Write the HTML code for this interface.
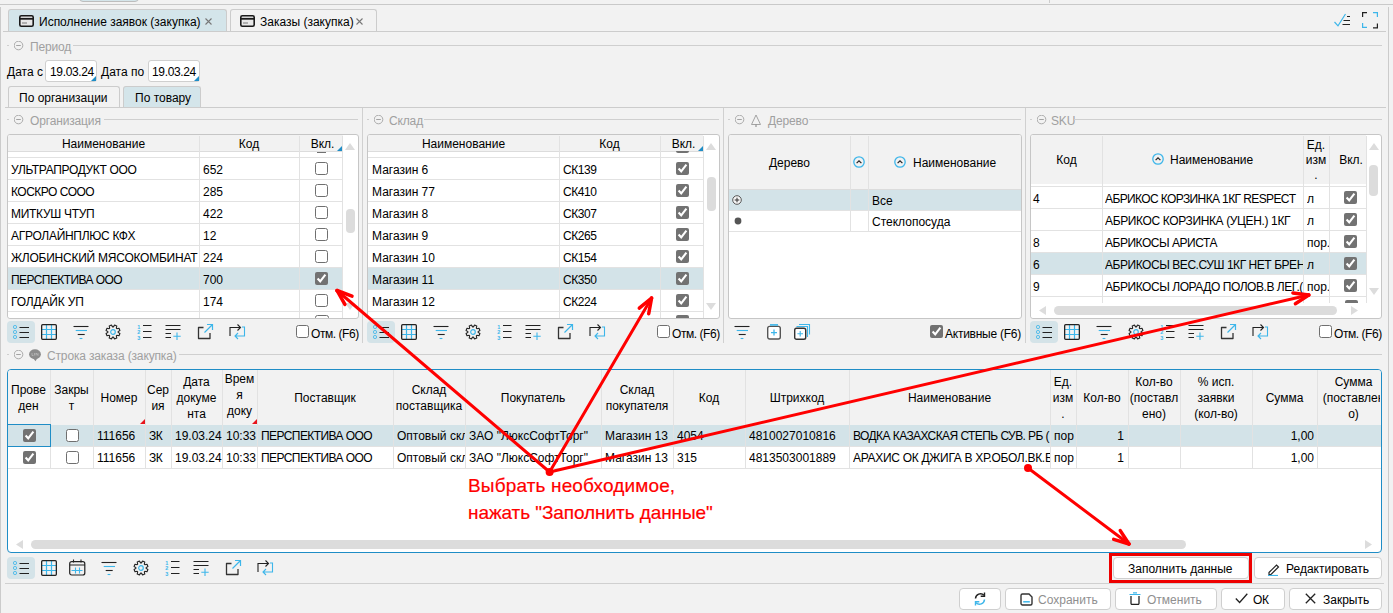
<!DOCTYPE html><html><head><meta charset="utf-8"><style>
html,body{margin:0;padding:0}
body{width:1393px;height:613px;overflow:hidden;position:relative;background:#f2f2f2;font-family:"Liberation Sans",sans-serif;font-size:12px;color:#000}
div{position:absolute;box-sizing:border-box}
.t{white-space:nowrap;line-height:14px;height:14px;overflow:visible}
</style></head><body>
<div style="left:1049px;top:0px;width:1px;height:3px;background:#cccccc"></div>
<div style="left:79px;top:-10px;width:60px;height:12px;background:#d4e5ea;border:1px solid #bdbdbd;border-radius:0 0 4px 4px"></div>
<div style="left:0px;top:4px;width:1393px;height:1px;background:#c9c9c9"></div>
<div style="left:0px;top:7px;width:1px;height:606px;background:#cbcbcb"></div>
<div style="left:1388px;top:7px;width:1px;height:606px;background:#cbcbcb"></div>
<div style="left:8px;top:9px;width:219px;height:23px;background:#d4e5ea;border:1px solid #cccccc;border-bottom:none;border-radius:3px 3px 0 0"></div>
<div style="left:230px;top:9px;width:147px;height:23px;background:#f2f2f2;border:1px solid #cccccc;border-bottom:none;border-radius:3px 3px 0 0"></div>
<div style="left:3px;top:31px;width:1383px;height:1px;background:#cccccc"></div>
<svg style="position:absolute;left:19px;top:15px;" width="15" height="12" viewBox="0 0 15 12"><rect x="0.8" y="0.8" width="13.4" height="10.4" rx="1.5" fill="#e8e8e8" stroke="#1a1a1a" stroke-width="1.6"/><path d="M1 3.8h13" stroke="#1a1a1a" stroke-width="1.8"/><path d="M3 8h5" stroke="#777" stroke-width="1"/></svg>
<svg style="position:absolute;left:240px;top:15px;" width="15" height="12" viewBox="0 0 15 12"><rect x="0.8" y="0.8" width="13.4" height="10.4" rx="1.5" fill="#e8e8e8" stroke="#1a1a1a" stroke-width="1.6"/><path d="M1 3.8h13" stroke="#1a1a1a" stroke-width="1.8"/><path d="M3 8h5" stroke="#777" stroke-width="1"/></svg>
<div class="t" style="left:39px;top:15px;">Исполнение заявок (закупка)</div>
<svg style="position:absolute;left:205px;top:18px;" width="7" height="7" viewBox="0 0 7 7"><path d="M0.5 0.5l6 6M6.5 0.5l-6 6" stroke="#777" stroke-width="1.1"/></svg>
<div class="t" style="left:260px;top:15px;">Заказы (закупка)</div>
<svg style="position:absolute;left:356px;top:18px;" width="7" height="7" viewBox="0 0 7 7"><path d="M0.5 0.5l6 6M6.5 0.5l-6 6" stroke="#777" stroke-width="1.1"/></svg>
<svg style="position:absolute;left:1334px;top:13px;" width="17" height="14" viewBox="0 0 17 14"><path d="M0.5 9l3.5 3.8L11.5 1" fill="none" stroke="#3db6ea" stroke-width="1.2"/><path d="M13 3.5h3M9.5 7.5h6.5M8.5 11.5h7.5" stroke="#222" stroke-width="1.2"/></svg>
<svg style="position:absolute;left:1362px;top:12px;" width="17" height="17" viewBox="0 0 17 17"><g fill="none" stroke-width="1.2"><path d="M0.6 5V0.6H5M15.4 11.5v4.4H11" stroke="#222"/><path d="M11 0.6h4.4V5M5 15.4H0.6V11" stroke="#3db6ea"/></g></svg>
<div style="left:7px;top:45px;width:2px;height:1px;background:#cfcfcf"></div>
<svg style="position:absolute;left:14px;top:41px;" width="10" height="10" viewBox="0 0 10 10"><circle cx="4.5" cy="4.5" r="4.3" fill="none" stroke="#a3a3a3" stroke-width="0.9"/><path d="M2.2 4.5h4.6" stroke="#a3a3a3" stroke-width="1"/></svg>
<div class="t" style="left:30px;top:40px;color:#a0a0a0;letter-spacing:-0.15px">Период</div>
<div style="left:73px;top:45px;width:1309px;height:1px;background:#cfcfcf"></div>
<div class="t" style="left:7px;top:65px;">Дата с</div>
<div style="left:45px;top:60px;width:52px;height:22px;background:#fff;border:1px solid #cfcfcf;border-radius:3px"></div>
<svg style="position:absolute;left:91px;top:76px;" width="5" height="5" viewBox="0 0 5 5"><path d="M5 0V5H0Z" fill="#1f8dc6"/></svg>
<div class="t" style="left:50px;top:65px;letter-spacing:-0.35px">19.03.24</div>
<div class="t" style="left:101px;top:65px;">Дата по</div>
<div style="left:148px;top:60px;width:52px;height:22px;background:#fff;border:1px solid #cfcfcf;border-radius:3px"></div>
<svg style="position:absolute;left:194px;top:76px;" width="5" height="5" viewBox="0 0 5 5"><path d="M5 0V5H0Z" fill="#1f8dc6"/></svg>
<div class="t" style="left:152px;top:65px;letter-spacing:-0.35px">19.03.24</div>
<div style="left:8px;top:86px;width:112px;height:22px;background:#f2f2f2;border:1px solid #cccccc;border-bottom:none;border-radius:3px 3px 0 0"></div>
<div style="left:123px;top:86px;width:78px;height:22px;background:#d4e5ea;border:1px solid #cccccc;border-bottom:none;border-radius:3px 3px 0 0"></div>
<div class="t" style="left:19px;top:91px;">По организации</div>
<div class="t" style="left:135px;top:91px;">По товару</div>
<div style="left:5px;top:107px;width:1381px;height:1px;background:#cccccc"></div>
<div style="left:362px;top:108px;width:1px;height:235px;background:#d0d0d0"></div>
<div style="left:723px;top:108px;width:1px;height:235px;background:#d0d0d0"></div>
<div style="left:1025px;top:108px;width:1px;height:235px;background:#d0d0d0"></div>
<div style="left:7px;top:119px;width:2px;height:1px;background:#cfcfcf"></div>
<svg style="position:absolute;left:14px;top:115px;" width="10" height="10" viewBox="0 0 10 10"><circle cx="4.5" cy="4.5" r="4.3" fill="none" stroke="#a3a3a3" stroke-width="0.9"/><path d="M2.2 4.5h4.6" stroke="#a3a3a3" stroke-width="1"/></svg>
<div class="t" style="left:30px;top:114px;color:#a0a0a0;letter-spacing:-0.15px">Организация</div>
<div style="left:104px;top:119px;width:254px;height:1px;background:#cfcfcf"></div>
<div style="left:7px;top:134px;width:352px;height:185px;background:#fff;border:1px solid #c6c6c6;border-radius:3px"></div>
<div style="left:8px;top:135px;width:335px;height:16px;background:#f2f2f2;border-radius:2px 0 0 0"></div>
<div style="left:8px;top:151px;width:335px;height:1px;background:#dcdcdc"></div>
<div class="t" style="left:8px;width:191px;text-align:center;top:137px;">Наименование</div>
<div class="t" style="left:199px;width:100px;text-align:center;top:137px;">Код</div>
<div class="t" style="left:301px;width:43px;text-align:center;top:137px;">Вкл.</div>
<svg style="position:absolute;left:337px;top:146px;" width="5" height="5" viewBox="0 0 5 5"><path d="M5 0V5H0Z" fill="#1f8dc6"/></svg>
<div style="left:8px;top:157px;width:335px;height:1px;background:#e2e2e2"></div>
<div style="left:317px;top:152px;width:9px;height:1px;background:#707070"></div>
<div style="left:8px;top:179px;width:335px;height:1px;background:#e2e2e2"></div>
<div class="t" style="left:11px;top:163px;"><span style="letter-spacing:-0.33px">УЛЬТРАПРОДУКТ ООО</span></div>
<div class="t" style="left:203px;top:163px;">652</div>
<svg style="position:absolute;left:315px;top:162px;" width="13" height="13" viewBox="0 0 13 13"><rect x="0.5" y="0.5" width="12" height="12" rx="2" fill="#fff" stroke="#6f6f6f" stroke-width="1"/></svg>
<div style="left:8px;top:201px;width:335px;height:1px;background:#e2e2e2"></div>
<div class="t" style="left:11px;top:185px;"><span style="letter-spacing:-0.5px">КОСКРО СООО</span></div>
<div class="t" style="left:203px;top:185px;">285</div>
<svg style="position:absolute;left:315px;top:184px;" width="13" height="13" viewBox="0 0 13 13"><rect x="0.5" y="0.5" width="12" height="12" rx="2" fill="#fff" stroke="#6f6f6f" stroke-width="1"/></svg>
<div style="left:8px;top:223px;width:335px;height:1px;background:#e2e2e2"></div>
<div class="t" style="left:11px;top:207px;"><span style="letter-spacing:-0.3px">МИТКУШ ЧТУП</span></div>
<div class="t" style="left:203px;top:207px;">422</div>
<svg style="position:absolute;left:315px;top:206px;" width="13" height="13" viewBox="0 0 13 13"><rect x="0.5" y="0.5" width="12" height="12" rx="2" fill="#fff" stroke="#6f6f6f" stroke-width="1"/></svg>
<div style="left:8px;top:245px;width:335px;height:1px;background:#e2e2e2"></div>
<div class="t" style="left:11px;top:229px;"><span style="letter-spacing:-0.28px">АГРОЛАЙНПЛЮС КФХ</span></div>
<div class="t" style="left:203px;top:229px;">12</div>
<svg style="position:absolute;left:315px;top:228px;" width="13" height="13" viewBox="0 0 13 13"><rect x="0.5" y="0.5" width="12" height="12" rx="2" fill="#fff" stroke="#6f6f6f" stroke-width="1"/></svg>
<div style="left:8px;top:267px;width:335px;height:1px;background:#e2e2e2"></div>
<div class="t" style="left:11px;top:251px;"><span style="letter-spacing:-0.24px">ЖЛОБИНСКИЙ МЯСОКОМБИНАТ</span></div>
<div class="t" style="left:203px;top:251px;">224</div>
<svg style="position:absolute;left:315px;top:250px;" width="13" height="13" viewBox="0 0 13 13"><rect x="0.5" y="0.5" width="12" height="12" rx="2" fill="#fff" stroke="#6f6f6f" stroke-width="1"/></svg>
<div style="left:8px;top:268px;width:335px;height:21px;background:#d3e3e8"></div>
<div style="left:8px;top:289px;width:335px;height:1px;background:#e2e2e2"></div>
<div class="t" style="left:11px;top:273px;"><span style="letter-spacing:-0.58px">ПЕРСПЕКТИВА ООО</span></div>
<div class="t" style="left:203px;top:273px;">700</div>
<svg style="position:absolute;left:315px;top:272px;" width="13" height="13" viewBox="0 0 13 13"><rect x="0" y="0" width="13" height="13" rx="2" fill="#727272"/><path d="M2.6 6.6l2.6 2.7 5.2-6.6" fill="none" stroke="#fff" stroke-width="2.1"/></svg>
<div style="left:8px;top:311px;width:335px;height:1px;background:#e2e2e2"></div>
<div class="t" style="left:11px;top:295px;"><span style="letter-spacing:-0.15px">ГОЛДАЙК УП</span></div>
<div class="t" style="left:203px;top:295px;">174</div>
<svg style="position:absolute;left:315px;top:294px;" width="13" height="13" viewBox="0 0 13 13"><rect x="0.5" y="0.5" width="12" height="12" rx="2" fill="#fff" stroke="#6f6f6f" stroke-width="1"/></svg>
<div style="left:8px;top:312px;width:335px;height:6px;background:#fff;border-radius:0 0 0 3px;overflow:hidden"></div>
<svg style="position:absolute;left:315px;top:315px;" width="14" height="3" viewBox="0 0 14 3"><rect x="0.5" y="0.5" width="13" height="13" rx="2" fill="#fff" stroke="#6f6f6f"/></svg>
<div style="left:199px;top:136px;width:1px;height:182px;background:#e2e2e2"></div>
<div style="left:299px;top:136px;width:1px;height:182px;background:#e2e2e2"></div>
<div style="left:342px;top:136px;width:1px;height:182px;background:#e2e2e2"></div>
<svg style="position:absolute;left:345px;top:143px;" width="10" height="7" viewBox="0 0 10 7"><path d="M0 7L5 0L10 7Z" fill="#dcdcdc"/></svg>
<div style="left:346px;top:209px;width:9px;height:24px;background:#dcdcdc;border-radius:4px"></div>
<svg style="position:absolute;left:345px;top:303px;" width="10" height="7" viewBox="0 0 10 7"><path d="M0 0L5 7L10 0Z" fill="#dcdcdc"/></svg>
<div style="left:7px;top:321px;width:28px;height:22px;background:#d4e3e8;border-radius:4px"></div>
<svg style="position:absolute;left:13px;top:324px;" width="17" height="17" viewBox="0 0 17 17"><g fill="none" stroke="#3db6ea" stroke-width="1"><rect x="0.5" y="1.5" width="3" height="3" rx="1.2"/><rect x="0.5" y="6.5" width="3" height="3" rx="1.2"/><rect x="0.5" y="11.5" width="3" height="3" rx="1.2"/></g><g stroke="#222" stroke-width="1.1"><path d="M6.5 3.5h9.5M6.5 8.5h9.5M6.5 13.5h9.5"/></g></svg>
<svg style="position:absolute;left:41px;top:324px;" width="17" height="17" viewBox="0 0 17 17"><g stroke="#3db6ea" stroke-width="1.2"><path d="M5.5 1v15M10.5 1v15M1 5.5h15M1 10.5h15"/></g><rect x="0.65" y="0.65" width="14.7" height="14.7" rx="1" fill="none" stroke="#222" stroke-width="1.3"/></svg>
<svg style="position:absolute;left:73px;top:323px;" width="17" height="17" viewBox="0 0 17 17"><g stroke-width="1.1"><path d="M0.5 3.5h15" stroke="#222"/><path d="M2.7 7.5h11.3" stroke="#3db6ea"/><path d="M4.7 11.5h7" stroke="#222"/><path d="M6.6 15.5h2.8" stroke="#3db6ea"/></g></svg>
<svg style="position:absolute;left:105px;top:324px;" width="17" height="17" viewBox="0 0 17 17"><path d="M13.09 8.37L14.92 9.57L14.01 11.79L11.86 11.33L11.33 11.86L11.79 14.01L9.57 14.92L8.37 13.09L7.63 13.09L6.43 14.92L4.21 14.01L4.67 11.86L4.14 11.33L1.99 11.79L1.08 9.57L2.91 8.37L2.91 7.63L1.08 6.43L1.99 4.21L4.14 4.67L4.67 4.14L4.21 1.99L6.43 1.08L7.63 2.91L8.37 2.91L9.57 1.08L11.79 1.99L11.33 4.14L11.86 4.67L14.01 4.21L14.92 6.43L13.09 7.63Z" fill="none" stroke="#222" stroke-width="1.1" stroke-linejoin="round"/><circle cx="8" cy="8" r="2.3" fill="none" stroke="#3db6ea" stroke-width="1.2"/></svg>
<svg style="position:absolute;left:137px;top:323px;" width="17" height="17" viewBox="0 0 17 17"><g fill="#3db6ea" font-family="Liberation Sans" font-size="5.5" font-weight="bold"><text x="0.3" y="5.5">1</text><text x="0.3" y="11">2</text><text x="0.3" y="16.5">3</text></g><g stroke="#222" stroke-width="1.1"><path d="M6 2.5h8.5M6 8.5h8.5M6 14.5h8.5"/></g></svg>
<svg style="position:absolute;left:165px;top:324px;" width="17" height="17" viewBox="0 0 17 17"><g stroke="#222" stroke-width="1.1"><path d="M0.5 1.5h15M0.5 5.5h15M0.5 9.5h5.5M0.5 13.5h5.5"/></g><g stroke="#3db6ea" stroke-width="1.1"><path d="M12 8.5v7.5M8.3 12.2h7.4"/></g></svg>
<svg style="position:absolute;left:197px;top:323px;" width="17" height="17" viewBox="0 0 17 17"><path d="M6.5 4.5H1.5V15.5H13V10" fill="none" stroke="#333" stroke-width="1.3" stroke-linejoin="round"/><g stroke="#3db6ea" stroke-width="1.2" fill="none"><path d="M7.5 9.5l7.5-7.5M10 1.5h5.5V7"/></g></svg>
<svg style="position:absolute;left:229px;top:323px;" width="17" height="17" viewBox="0 0 17 17"><g fill="none" stroke-width="1.1"><path d="M1 13V4.5h10M8.5 1.5l3 3-3 3" stroke="#222"/><path d="M13 4h2.5v9H6M9 10l-3 3 3 3" stroke="#3db6ea"/></g></svg>
<svg style="position:absolute;left:296px;top:325px;" width="13" height="13" viewBox="0 0 13 13"><rect x="0.5" y="0.5" width="12" height="12" rx="2" fill="#fff" stroke="#6f6f6f" stroke-width="1"/></svg>
<div class="t" style="left:311px;top:327px;letter-spacing:-0.45px">Отм. (F6)</div>
<div style="left:367px;top:119px;width:2px;height:1px;background:#cfcfcf"></div>
<svg style="position:absolute;left:374px;top:115px;" width="10" height="10" viewBox="0 0 10 10"><circle cx="4.5" cy="4.5" r="4.3" fill="none" stroke="#a3a3a3" stroke-width="0.9"/><path d="M2.2 4.5h4.6" stroke="#a3a3a3" stroke-width="1"/></svg>
<div class="t" style="left:389px;top:114px;color:#a0a0a0;letter-spacing:-0.15px">Склад</div>
<div style="left:424px;top:119px;width:295px;height:1px;background:#cfcfcf"></div>
<div style="left:367px;top:134px;width:353px;height:185px;background:#fff;border:1px solid #c6c6c6;border-radius:3px"></div>
<div style="left:368px;top:135px;width:335px;height:16px;background:#f2f2f2;border-radius:2px 0 0 0"></div>
<div style="left:368px;top:151px;width:335px;height:1px;background:#dcdcdc"></div>
<div class="t" style="left:368px;width:191px;text-align:center;top:137px;">Наименование</div>
<div class="t" style="left:559px;width:101px;text-align:center;top:137px;">Код</div>
<div class="t" style="left:662px;width:43px;text-align:center;top:137px;">Вкл.</div>
<svg style="position:absolute;left:698px;top:146px;" width="5" height="5" viewBox="0 0 5 5"><path d="M5 0V5H0Z" fill="#1f8dc6"/></svg>
<div style="left:368px;top:157px;width:335px;height:1px;background:#e2e2e2"></div>
<div style="left:368px;top:179px;width:335px;height:1px;background:#e2e2e2"></div>
<div class="t" style="left:372px;top:163px;">Магазин 6</div>
<div class="t" style="left:563px;top:163px;"><span style="letter-spacing:-0.45px">СК139</span></div>
<svg style="position:absolute;left:676px;top:162px;" width="13" height="13" viewBox="0 0 13 13"><rect x="0" y="0" width="13" height="13" rx="2" fill="#727272"/><path d="M2.6 6.6l2.6 2.7 5.2-6.6" fill="none" stroke="#fff" stroke-width="2.1"/></svg>
<div style="left:368px;top:201px;width:335px;height:1px;background:#e2e2e2"></div>
<div class="t" style="left:372px;top:185px;">Магазин 77</div>
<div class="t" style="left:563px;top:185px;"><span style="letter-spacing:-0.45px">СК410</span></div>
<svg style="position:absolute;left:676px;top:184px;" width="13" height="13" viewBox="0 0 13 13"><rect x="0" y="0" width="13" height="13" rx="2" fill="#727272"/><path d="M2.6 6.6l2.6 2.7 5.2-6.6" fill="none" stroke="#fff" stroke-width="2.1"/></svg>
<div style="left:368px;top:223px;width:335px;height:1px;background:#e2e2e2"></div>
<div class="t" style="left:372px;top:207px;">Магазин 8</div>
<div class="t" style="left:563px;top:207px;"><span style="letter-spacing:-0.45px">СК307</span></div>
<svg style="position:absolute;left:676px;top:206px;" width="13" height="13" viewBox="0 0 13 13"><rect x="0" y="0" width="13" height="13" rx="2" fill="#727272"/><path d="M2.6 6.6l2.6 2.7 5.2-6.6" fill="none" stroke="#fff" stroke-width="2.1"/></svg>
<div style="left:368px;top:245px;width:335px;height:1px;background:#e2e2e2"></div>
<div class="t" style="left:372px;top:229px;">Магазин 9</div>
<div class="t" style="left:563px;top:229px;"><span style="letter-spacing:-0.45px">СК265</span></div>
<svg style="position:absolute;left:676px;top:228px;" width="13" height="13" viewBox="0 0 13 13"><rect x="0" y="0" width="13" height="13" rx="2" fill="#727272"/><path d="M2.6 6.6l2.6 2.7 5.2-6.6" fill="none" stroke="#fff" stroke-width="2.1"/></svg>
<div style="left:368px;top:267px;width:335px;height:1px;background:#e2e2e2"></div>
<div class="t" style="left:372px;top:251px;">Магазин 10</div>
<div class="t" style="left:563px;top:251px;"><span style="letter-spacing:-0.45px">СК154</span></div>
<svg style="position:absolute;left:676px;top:250px;" width="13" height="13" viewBox="0 0 13 13"><rect x="0" y="0" width="13" height="13" rx="2" fill="#727272"/><path d="M2.6 6.6l2.6 2.7 5.2-6.6" fill="none" stroke="#fff" stroke-width="2.1"/></svg>
<div style="left:368px;top:268px;width:335px;height:21px;background:#d3e3e8"></div>
<div style="left:368px;top:289px;width:335px;height:1px;background:#e2e2e2"></div>
<div class="t" style="left:372px;top:273px;">Магазин 11</div>
<div class="t" style="left:563px;top:273px;"><span style="letter-spacing:-0.45px">СК350</span></div>
<svg style="position:absolute;left:676px;top:272px;" width="13" height="13" viewBox="0 0 13 13"><rect x="0" y="0" width="13" height="13" rx="2" fill="#727272"/><path d="M2.6 6.6l2.6 2.7 5.2-6.6" fill="none" stroke="#fff" stroke-width="2.1"/></svg>
<div style="left:368px;top:311px;width:335px;height:1px;background:#e2e2e2"></div>
<div class="t" style="left:372px;top:295px;">Магазин 12</div>
<div class="t" style="left:563px;top:295px;"><span style="letter-spacing:-0.45px">СК224</span></div>
<svg style="position:absolute;left:676px;top:294px;" width="13" height="13" viewBox="0 0 13 13"><rect x="0" y="0" width="13" height="13" rx="2" fill="#727272"/><path d="M2.6 6.6l2.6 2.7 5.2-6.6" fill="none" stroke="#fff" stroke-width="2.1"/></svg>
<svg style="position:absolute;left:676px;top:151px;" width="13" height="3" viewBox="0 0 13 3"><rect x="0" y="-11" width="13" height="13" rx="2" fill="#727272"/></svg>
<div style="left:368px;top:312px;width:335px;height:6px;background:#fff;overflow:hidden;border-radius:0 0 0 3px"></div>
<svg style="position:absolute;left:676px;top:315px;" width="13" height="3" viewBox="0 0 13 3"><rect x="0" y="0" width="13" height="13" rx="2" fill="#727272"/></svg>
<div style="left:559px;top:136px;width:1px;height:182px;background:#e2e2e2"></div>
<div style="left:660px;top:136px;width:1px;height:182px;background:#e2e2e2"></div>
<div style="left:703px;top:136px;width:1px;height:182px;background:#e2e2e2"></div>
<svg style="position:absolute;left:706px;top:143px;" width="10" height="7" viewBox="0 0 10 7"><path d="M0 7L5 0L10 7Z" fill="#dcdcdc"/></svg>
<div style="left:707px;top:177px;width:9px;height:34px;background:#dcdcdc;border-radius:4px"></div>
<svg style="position:absolute;left:706px;top:303px;" width="10" height="7" viewBox="0 0 10 7"><path d="M0 0L5 7L10 0Z" fill="#dcdcdc"/></svg>
<div style="left:367px;top:321px;width:28px;height:22px;background:#d4e3e8;border-radius:4px"></div>
<svg style="position:absolute;left:373px;top:324px;" width="17" height="17" viewBox="0 0 17 17"><g fill="none" stroke="#3db6ea" stroke-width="1"><rect x="0.5" y="1.5" width="3" height="3" rx="1.2"/><rect x="0.5" y="6.5" width="3" height="3" rx="1.2"/><rect x="0.5" y="11.5" width="3" height="3" rx="1.2"/></g><g stroke="#222" stroke-width="1.1"><path d="M6.5 3.5h9.5M6.5 8.5h9.5M6.5 13.5h9.5"/></g></svg>
<svg style="position:absolute;left:401px;top:324px;" width="17" height="17" viewBox="0 0 17 17"><g stroke="#3db6ea" stroke-width="1.2"><path d="M5.5 1v15M10.5 1v15M1 5.5h15M1 10.5h15"/></g><rect x="0.65" y="0.65" width="14.7" height="14.7" rx="1" fill="none" stroke="#222" stroke-width="1.3"/></svg>
<svg style="position:absolute;left:433px;top:323px;" width="17" height="17" viewBox="0 0 17 17"><g stroke-width="1.1"><path d="M0.5 3.5h15" stroke="#222"/><path d="M2.7 7.5h11.3" stroke="#3db6ea"/><path d="M4.7 11.5h7" stroke="#222"/><path d="M6.6 15.5h2.8" stroke="#3db6ea"/></g></svg>
<svg style="position:absolute;left:465px;top:324px;" width="17" height="17" viewBox="0 0 17 17"><path d="M13.09 8.37L14.92 9.57L14.01 11.79L11.86 11.33L11.33 11.86L11.79 14.01L9.57 14.92L8.37 13.09L7.63 13.09L6.43 14.92L4.21 14.01L4.67 11.86L4.14 11.33L1.99 11.79L1.08 9.57L2.91 8.37L2.91 7.63L1.08 6.43L1.99 4.21L4.14 4.67L4.67 4.14L4.21 1.99L6.43 1.08L7.63 2.91L8.37 2.91L9.57 1.08L11.79 1.99L11.33 4.14L11.86 4.67L14.01 4.21L14.92 6.43L13.09 7.63Z" fill="none" stroke="#222" stroke-width="1.1" stroke-linejoin="round"/><circle cx="8" cy="8" r="2.3" fill="none" stroke="#3db6ea" stroke-width="1.2"/></svg>
<svg style="position:absolute;left:497px;top:323px;" width="17" height="17" viewBox="0 0 17 17"><g fill="#3db6ea" font-family="Liberation Sans" font-size="5.5" font-weight="bold"><text x="0.3" y="5.5">1</text><text x="0.3" y="11">2</text><text x="0.3" y="16.5">3</text></g><g stroke="#222" stroke-width="1.1"><path d="M6 2.5h8.5M6 8.5h8.5M6 14.5h8.5"/></g></svg>
<svg style="position:absolute;left:525px;top:324px;" width="17" height="17" viewBox="0 0 17 17"><g stroke="#222" stroke-width="1.1"><path d="M0.5 1.5h15M0.5 5.5h15M0.5 9.5h5.5M0.5 13.5h5.5"/></g><g stroke="#3db6ea" stroke-width="1.1"><path d="M12 8.5v7.5M8.3 12.2h7.4"/></g></svg>
<svg style="position:absolute;left:557px;top:323px;" width="17" height="17" viewBox="0 0 17 17"><path d="M6.5 4.5H1.5V15.5H13V10" fill="none" stroke="#333" stroke-width="1.3" stroke-linejoin="round"/><g stroke="#3db6ea" stroke-width="1.2" fill="none"><path d="M7.5 9.5l7.5-7.5M10 1.5h5.5V7"/></g></svg>
<svg style="position:absolute;left:589px;top:323px;" width="17" height="17" viewBox="0 0 17 17"><g fill="none" stroke-width="1.1"><path d="M1 13V4.5h10M8.5 1.5l3 3-3 3" stroke="#222"/><path d="M13 4h2.5v9H6M9 10l-3 3 3 3" stroke="#3db6ea"/></g></svg>
<svg style="position:absolute;left:657px;top:325px;" width="13" height="13" viewBox="0 0 13 13"><rect x="0.5" y="0.5" width="12" height="12" rx="2" fill="#fff" stroke="#6f6f6f" stroke-width="1"/></svg>
<div class="t" style="left:672px;top:327px;letter-spacing:-0.45px">Отм. (F6)</div>
<div style="left:728px;top:119px;width:2px;height:1px;background:#cfcfcf"></div>
<svg style="position:absolute;left:735px;top:115px;" width="10" height="10" viewBox="0 0 10 10"><circle cx="4.5" cy="4.5" r="4.3" fill="none" stroke="#a3a3a3" stroke-width="0.9"/><path d="M2.2 4.5h4.6" stroke="#a3a3a3" stroke-width="1"/></svg>
<svg style="position:absolute;left:750px;top:114px;" width="12" height="14" viewBox="0 0 12 14"><path d="M1.5 10.5L6 1L10.5 10.5Z" fill="none" stroke="#9a9a9a" stroke-width="0.9" stroke-linejoin="round"/><path d="M6 10.5v2.5" stroke="#8a8a8a" stroke-width="1.1"/></svg>
<div class="t" style="left:768px;top:114px;color:#a0a0a0;letter-spacing:-0.15px">Дерево</div>
<div style="left:809px;top:119px;width:212px;height:1px;background:#cfcfcf"></div>
<div style="left:728px;top:134px;width:294px;height:185px;background:#fff;border:1px solid #c6c6c6;border-radius:3px"></div>
<div style="left:729px;top:135px;width:292px;height:54px;background:#f2f2f2;border-radius:2px 2px 0 0"></div>
<div style="left:729px;top:189px;width:292px;height:1px;background:#dcdcdc"></div>
<div class="t" style="left:729px;width:121px;text-align:center;top:156px;">Дерево</div>
<svg style="position:absolute;left:853px;top:156px;" width="12" height="12" viewBox="0 0 12 12"><circle cx="6" cy="6" r="5.2" fill="none" stroke="#3db6ea" stroke-width="1.3"/><path d="M3.6 7.2L6 4.8L8.4 7.2" fill="none" stroke="#222" stroke-width="1.2"/></svg>
<svg style="position:absolute;left:894px;top:156px;" width="12" height="12" viewBox="0 0 12 12"><circle cx="6" cy="6" r="5.2" fill="none" stroke="#3db6ea" stroke-width="1.3"/><path d="M3.6 7.2L6 4.8L8.4 7.2" fill="none" stroke="#222" stroke-width="1.2"/></svg>
<div class="t" style="left:913px;top:156px;">Наименование</div>
<div style="left:729px;top:190px;width:292px;height:20px;background:#d3e3e8"></div>
<div style="left:729px;top:210px;width:292px;height:1px;background:#e2e2e2"></div>
<div style="left:729px;top:231px;width:292px;height:1px;background:#e2e2e2"></div>
<svg style="position:absolute;left:732px;top:195px;" width="10" height="10" viewBox="0 0 10 10"><circle cx="5" cy="5" r="4.3" fill="#f5f5f5" stroke="#555" stroke-width="1"/><path d="M2.7 5h4.6M5 2.7v4.6" stroke="#333" stroke-width="1"/></svg>
<svg style="position:absolute;left:734px;top:217px;" width="8" height="8" viewBox="0 0 8 8"><circle cx="4" cy="4" r="3.4" fill="#555"/></svg>
<div class="t" style="left:872px;top:194px;">Все</div>
<div class="t" style="left:872px;top:215px;">Стеклопосуда</div>
<div style="left:850px;top:136px;width:1px;height:95px;background:#e2e2e2"></div>
<div style="left:868px;top:136px;width:1px;height:95px;background:#e2e2e2"></div>
<svg style="position:absolute;left:734px;top:323px;" width="17" height="17" viewBox="0 0 17 17"><g stroke-width="1.1"><path d="M0.5 3.5h15" stroke="#222"/><path d="M2.7 7.5h11.3" stroke="#3db6ea"/><path d="M4.7 11.5h7" stroke="#222"/><path d="M6.6 15.5h2.8" stroke="#3db6ea"/></g></svg>
<svg style="position:absolute;left:767px;top:323px;" width="15" height="17" viewBox="0 0 15 17"><rect x="0.7" y="3.4" width="12.6" height="12.6" rx="2" fill="#fff" stroke="#555" stroke-width="1.4"/><path d="M3 1.9h8" stroke="#3db6ea" stroke-width="1.6"/><path d="M7 6.6v6M4 9.6h6" stroke="#3db6ea" stroke-width="1.3"/></svg>
<svg style="position:absolute;left:794px;top:323px;" width="17" height="17" viewBox="0 0 17 17"><path d="M2.5 3.5H13.5V14M5 1.5H15.5V11.5" fill="none" stroke="#3db6ea" stroke-width="1.1"/><rect x="0.7" y="5.2" width="11" height="11" rx="1.8" fill="#fff" stroke="#333" stroke-width="1.4"/><path d="M6.2 7.9v5.6M3.4 10.7h5.6" stroke="#3db6ea" stroke-width="1.1"/></svg>
<svg style="position:absolute;left:930px;top:325px;" width="13" height="13" viewBox="0 0 13 13"><rect x="0" y="0" width="13" height="13" rx="2" fill="#727272"/><path d="M2.6 6.6l2.6 2.7 5.2-6.6" fill="none" stroke="#fff" stroke-width="2.1"/></svg>
<div class="t" style="left:945px;top:327px;letter-spacing:-0.25px">Активные (F6)</div>
<div style="left:1030px;top:119px;width:2px;height:1px;background:#cfcfcf"></div>
<svg style="position:absolute;left:1037px;top:115px;" width="10" height="10" viewBox="0 0 10 10"><circle cx="4.5" cy="4.5" r="4.3" fill="none" stroke="#a3a3a3" stroke-width="0.9"/><path d="M2.2 4.5h4.6" stroke="#a3a3a3" stroke-width="1"/></svg>
<div class="t" style="left:1051px;top:114px;color:#a0a0a0;letter-spacing:-0.15px">SKU</div>
<div style="left:1074px;top:119px;width:308px;height:1px;background:#cfcfcf"></div>
<div style="left:1030px;top:134px;width:352px;height:185px;background:#fff;border:1px solid #c6c6c6;border-radius:3px"></div>
<div style="left:1031px;top:135px;width:335px;height:49px;background:#f2f2f2;border-radius:2px 0 0 0"></div>
<div class="t" style="left:1031px;width:71px;text-align:center;top:153px;">Код</div>
<svg style="position:absolute;left:1152px;top:153px;" width="12" height="12" viewBox="0 0 12 12"><circle cx="6" cy="6" r="5.2" fill="none" stroke="#3db6ea" stroke-width="1.3"/><path d="M3.6 7.2L6 4.8L8.4 7.2" fill="none" stroke="#222" stroke-width="1.2"/></svg>
<div class="t" style="left:1170px;top:153px;">Наименование</div>
<div class="t" style="left:1303px;width:26px;text-align:center;top:138px;">Ед.</div>
<div class="t" style="left:1303px;width:26px;text-align:center;top:153px;">изм</div>
<div class="t" style="left:1303px;width:26px;text-align:center;top:168px;">.</div>
<div class="t" style="left:1333px;width:36px;text-align:center;top:153px;">Вкл.</div>
<div style="left:1031px;top:186px;width:335px;height:1px;background:#e2e2e2"></div>
<div style="left:1031px;top:208px;width:335px;height:1px;background:#e2e2e2"></div>
<div class="t" style="left:1033px;top:192px;">4</div>
<div class="t" style="left:1105px;top:192px;width:199px;overflow:hidden"><span style="letter-spacing:-0.61px">АБРИКОС КОРЗИНКА 1КГ RESPECT</span></div>
<div class="t" style="left:1307px;top:192px;width:23px;overflow:hidden">л</div>
<svg style="position:absolute;left:1344px;top:191px;" width="13" height="13" viewBox="0 0 13 13"><rect x="0" y="0" width="13" height="13" rx="2" fill="#727272"/><path d="M2.6 6.6l2.6 2.7 5.2-6.6" fill="none" stroke="#fff" stroke-width="2.1"/></svg>
<div style="left:1031px;top:230px;width:335px;height:1px;background:#e2e2e2"></div>
<div class="t" style="left:1033px;top:214px;"></div>
<div class="t" style="left:1105px;top:214px;width:199px;overflow:hidden"><span style="letter-spacing:-0.37px">АБРИКОС КОРЗИНКА (УЦЕН.) 1КГ</span></div>
<div class="t" style="left:1307px;top:214px;width:23px;overflow:hidden">л</div>
<svg style="position:absolute;left:1344px;top:213px;" width="13" height="13" viewBox="0 0 13 13"><rect x="0" y="0" width="13" height="13" rx="2" fill="#727272"/><path d="M2.6 6.6l2.6 2.7 5.2-6.6" fill="none" stroke="#fff" stroke-width="2.1"/></svg>
<div style="left:1031px;top:252px;width:335px;height:1px;background:#e2e2e2"></div>
<div class="t" style="left:1033px;top:236px;">8</div>
<div class="t" style="left:1105px;top:236px;width:199px;overflow:hidden"><span style="letter-spacing:-0.48px">АБРИКОСЫ АРИСТА</span></div>
<div class="t" style="left:1307px;top:236px;width:23px;overflow:hidden">пор.</div>
<svg style="position:absolute;left:1344px;top:235px;" width="13" height="13" viewBox="0 0 13 13"><rect x="0" y="0" width="13" height="13" rx="2" fill="#727272"/><path d="M2.6 6.6l2.6 2.7 5.2-6.6" fill="none" stroke="#fff" stroke-width="2.1"/></svg>
<div style="left:1031px;top:253px;width:335px;height:21px;background:#d3e3e8"></div>
<div style="left:1031px;top:274px;width:335px;height:1px;background:#e2e2e2"></div>
<div class="t" style="left:1033px;top:258px;">6</div>
<div class="t" style="left:1105px;top:258px;width:199px;overflow:hidden"><span style="letter-spacing:-0.45px">АБРИКОСЫ ВЕС.СУШ 1КГ НЕТ БРЕНД</span></div>
<div class="t" style="left:1307px;top:258px;width:23px;overflow:hidden">л</div>
<svg style="position:absolute;left:1344px;top:257px;" width="13" height="13" viewBox="0 0 13 13"><rect x="0" y="0" width="13" height="13" rx="2" fill="#727272"/><path d="M2.6 6.6l2.6 2.7 5.2-6.6" fill="none" stroke="#fff" stroke-width="2.1"/></svg>
<div style="left:1031px;top:296px;width:335px;height:1px;background:#e2e2e2"></div>
<div class="t" style="left:1033px;top:280px;">9</div>
<div class="t" style="left:1105px;top:280px;width:199px;overflow:hidden"><span style="letter-spacing:-0.45px">АБРИКОСЫ ЛОРАДО ПОЛОВ.В ЛЕГ.(</span></div>
<div class="t" style="left:1307px;top:280px;width:23px;overflow:hidden">пор.</div>
<svg style="position:absolute;left:1344px;top:279px;" width="13" height="13" viewBox="0 0 13 13"><rect x="0" y="0" width="13" height="13" rx="2" fill="#727272"/><path d="M2.6 6.6l2.6 2.7 5.2-6.6" fill="none" stroke="#fff" stroke-width="2.1"/></svg>
<svg style="position:absolute;left:1345px;top:300px;" width="13" height="3" viewBox="0 0 13 3"><rect x="0" y="0" width="13" height="13" rx="2" fill="#727272"/></svg>
<div style="left:1031px;top:303px;width:335px;height:15px;background:#fff;border-radius:0 0 0 3px"></div>
<div style="left:1102px;top:136px;width:1px;height:167px;background:#e2e2e2"></div>
<div style="left:1303px;top:136px;width:1px;height:167px;background:#e2e2e2"></div>
<div style="left:1329px;top:136px;width:1px;height:167px;background:#e2e2e2"></div>
<div style="left:1366px;top:136px;width:1px;height:167px;background:#e2e2e2"></div>
<svg style="position:absolute;left:1369px;top:143px;" width="10" height="7" viewBox="0 0 10 7"><path d="M0 7L5 0L10 7Z" fill="#dcdcdc"/></svg>
<div style="left:1369px;top:165px;width:9px;height:31px;background:#dcdcdc;border-radius:4px"></div>
<svg style="position:absolute;left:1369px;top:288px;" width="10" height="7" viewBox="0 0 10 7"><path d="M0 0L5 7L10 0Z" fill="#dcdcdc"/></svg>
<svg style="position:absolute;left:1039px;top:306px;" width="7" height="9" viewBox="0 0 7 9"><path d="M7 0L0 4.5L7 9Z" fill="#dcdcdc"/></svg>
<div style="left:1054px;top:306px;width:283px;height:9px;background:#dcdcdc;border-radius:4.5px"></div>
<svg style="position:absolute;left:1351px;top:306px;" width="7" height="9" viewBox="0 0 7 9"><path d="M0 0L7 4.5L0 9Z" fill="#dcdcdc"/></svg>
<div style="left:1030px;top:321px;width:28px;height:22px;background:#d4e3e8;border-radius:4px"></div>
<svg style="position:absolute;left:1036px;top:324px;" width="17" height="17" viewBox="0 0 17 17"><g fill="none" stroke="#3db6ea" stroke-width="1"><rect x="0.5" y="1.5" width="3" height="3" rx="1.2"/><rect x="0.5" y="6.5" width="3" height="3" rx="1.2"/><rect x="0.5" y="11.5" width="3" height="3" rx="1.2"/></g><g stroke="#222" stroke-width="1.1"><path d="M6.5 3.5h9.5M6.5 8.5h9.5M6.5 13.5h9.5"/></g></svg>
<svg style="position:absolute;left:1064px;top:324px;" width="17" height="17" viewBox="0 0 17 17"><g stroke="#3db6ea" stroke-width="1.2"><path d="M5.5 1v15M10.5 1v15M1 5.5h15M1 10.5h15"/></g><rect x="0.65" y="0.65" width="14.7" height="14.7" rx="1" fill="none" stroke="#222" stroke-width="1.3"/></svg>
<svg style="position:absolute;left:1096px;top:323px;" width="17" height="17" viewBox="0 0 17 17"><g stroke-width="1.1"><path d="M0.5 3.5h15" stroke="#222"/><path d="M2.7 7.5h11.3" stroke="#3db6ea"/><path d="M4.7 11.5h7" stroke="#222"/><path d="M6.6 15.5h2.8" stroke="#3db6ea"/></g></svg>
<svg style="position:absolute;left:1128px;top:324px;" width="17" height="17" viewBox="0 0 17 17"><path d="M13.09 8.37L14.92 9.57L14.01 11.79L11.86 11.33L11.33 11.86L11.79 14.01L9.57 14.92L8.37 13.09L7.63 13.09L6.43 14.92L4.21 14.01L4.67 11.86L4.14 11.33L1.99 11.79L1.08 9.57L2.91 8.37L2.91 7.63L1.08 6.43L1.99 4.21L4.14 4.67L4.67 4.14L4.21 1.99L6.43 1.08L7.63 2.91L8.37 2.91L9.57 1.08L11.79 1.99L11.33 4.14L11.86 4.67L14.01 4.21L14.92 6.43L13.09 7.63Z" fill="none" stroke="#222" stroke-width="1.1" stroke-linejoin="round"/><circle cx="8" cy="8" r="2.3" fill="none" stroke="#3db6ea" stroke-width="1.2"/></svg>
<svg style="position:absolute;left:1160px;top:323px;" width="17" height="17" viewBox="0 0 17 17"><g fill="#3db6ea" font-family="Liberation Sans" font-size="5.5" font-weight="bold"><text x="0.3" y="5.5">1</text><text x="0.3" y="11">2</text><text x="0.3" y="16.5">3</text></g><g stroke="#222" stroke-width="1.1"><path d="M6 2.5h8.5M6 8.5h8.5M6 14.5h8.5"/></g></svg>
<svg style="position:absolute;left:1188px;top:324px;" width="17" height="17" viewBox="0 0 17 17"><g stroke="#222" stroke-width="1.1"><path d="M0.5 1.5h15M0.5 5.5h15M0.5 9.5h5.5M0.5 13.5h5.5"/></g><g stroke="#3db6ea" stroke-width="1.1"><path d="M12 8.5v7.5M8.3 12.2h7.4"/></g></svg>
<svg style="position:absolute;left:1220px;top:323px;" width="17" height="17" viewBox="0 0 17 17"><path d="M6.5 4.5H1.5V15.5H13V10" fill="none" stroke="#333" stroke-width="1.3" stroke-linejoin="round"/><g stroke="#3db6ea" stroke-width="1.2" fill="none"><path d="M7.5 9.5l7.5-7.5M10 1.5h5.5V7"/></g></svg>
<svg style="position:absolute;left:1252px;top:323px;" width="17" height="17" viewBox="0 0 17 17"><g fill="none" stroke-width="1.1"><path d="M1 13V4.5h10M8.5 1.5l3 3-3 3" stroke="#222"/><path d="M13 4h2.5v9H6M9 10l-3 3 3 3" stroke="#3db6ea"/></g></svg>
<svg style="position:absolute;left:1319px;top:325px;" width="13" height="13" viewBox="0 0 13 13"><rect x="0.5" y="0.5" width="12" height="12" rx="2" fill="#fff" stroke="#6f6f6f" stroke-width="1"/></svg>
<div class="t" style="left:1334px;top:327px;letter-spacing:-0.45px">Отм. (F6)</div>
<div style="left:7px;top:354px;width:2px;height:1px;background:#cfcfcf"></div>
<svg style="position:absolute;left:14px;top:350px;" width="10" height="10" viewBox="0 0 10 10"><circle cx="4.5" cy="4.5" r="4.3" fill="none" stroke="#a3a3a3" stroke-width="0.9"/><path d="M2.2 4.5h4.6" stroke="#a3a3a3" stroke-width="1"/></svg>
<svg style="position:absolute;left:29px;top:349px;" width="13" height="13" viewBox="0 0 13 13"><ellipse cx="6" cy="5.2" rx="5.9" ry="5" fill="#8c8c8c"/><path d="M4 9L6.5 12.3L8.5 9Z" fill="#8c8c8c"/><path d="M3 4v2.5h1.5M5.5 4v2.5M7 6.5V4l2 2.5V4" fill="none" stroke="#c8c8c8" stroke-width="0.6"/></svg>
<div class="t" style="left:47px;top:349px;color:#a0a0a0;letter-spacing:-0.15px">Строка заказа (закупка)</div>
<div style="left:179px;top:354px;width:1203px;height:1px;background:#cfcfcf"></div>
<div style="left:7px;top:369px;width:1375px;height:184px;background:#fff;border:1px solid #1f8dc6;border-radius:4px"></div>
<div style="left:8px;top:370px;width:1373px;height:55px;background:#f2f2f2;border-radius:3px 3px 0 0"></div>
<div style="left:8px;top:425px;width:1373px;height:21px;background:#d3e3e8"></div>
<div style="left:50px;top:370px;width:1px;height:98px;background:#e2e2e2"></div>
<div style="left:93px;top:370px;width:1px;height:98px;background:#e2e2e2"></div>
<div style="left:145px;top:370px;width:1px;height:98px;background:#e2e2e2"></div>
<div style="left:171px;top:370px;width:1px;height:98px;background:#e2e2e2"></div>
<div style="left:222px;top:370px;width:1px;height:98px;background:#e2e2e2"></div>
<div style="left:257px;top:370px;width:1px;height:98px;background:#e2e2e2"></div>
<div style="left:393px;top:370px;width:1px;height:98px;background:#e2e2e2"></div>
<div style="left:465px;top:370px;width:1px;height:98px;background:#e2e2e2"></div>
<div style="left:601px;top:370px;width:1px;height:98px;background:#e2e2e2"></div>
<div style="left:673px;top:370px;width:1px;height:98px;background:#e2e2e2"></div>
<div style="left:745px;top:370px;width:1px;height:98px;background:#e2e2e2"></div>
<div style="left:849px;top:370px;width:1px;height:98px;background:#e2e2e2"></div>
<div style="left:1050px;top:370px;width:1px;height:98px;background:#e2e2e2"></div>
<div style="left:1076px;top:370px;width:1px;height:98px;background:#e2e2e2"></div>
<div style="left:1128px;top:370px;width:1px;height:98px;background:#e2e2e2"></div>
<div style="left:1180px;top:370px;width:1px;height:98px;background:#e2e2e2"></div>
<div style="left:1252px;top:370px;width:1px;height:98px;background:#e2e2e2"></div>
<div style="left:1317px;top:370px;width:1px;height:98px;background:#e2e2e2"></div>
<div class="t" style="left:7px;width:43px;text-align:center;top:383px;overflow:hidden;">Прове</div>
<div class="t" style="left:7px;width:43px;text-align:center;top:399px;overflow:hidden;">ден</div>
<div class="t" style="left:50px;width:43px;text-align:center;top:383px;overflow:hidden;">Закры</div>
<div class="t" style="left:50px;width:43px;text-align:center;top:399px;overflow:hidden;">т</div>
<div class="t" style="left:93px;width:52px;text-align:center;top:391px;overflow:hidden;">Номер</div>
<div class="t" style="left:145px;width:26px;text-align:center;top:383px;overflow:hidden;">Сер</div>
<div class="t" style="left:145px;width:26px;text-align:center;top:399px;overflow:hidden;">ия</div>
<div class="t" style="left:171px;width:51px;text-align:center;top:375px;overflow:hidden;">Дата</div>
<div class="t" style="left:171px;width:51px;text-align:center;top:391px;overflow:hidden;">докуме</div>
<div class="t" style="left:171px;width:51px;text-align:center;top:407px;overflow:hidden;">нта</div>
<div class="t" style="left:222px;width:35px;text-align:center;top:372px;overflow:hidden;">Врем</div>
<div class="t" style="left:222px;width:35px;text-align:center;top:388px;overflow:hidden;">я</div>
<div class="t" style="left:222px;width:35px;text-align:center;top:404px;overflow:hidden;">доку</div>
<div class="t" style="left:257px;width:136px;text-align:center;top:391px;overflow:hidden;">Поставщик</div>
<div class="t" style="left:393px;width:72px;text-align:center;top:383px;overflow:hidden;">Склад</div>
<div class="t" style="left:393px;width:72px;text-align:center;top:399px;overflow:hidden;">поставщика</div>
<div class="t" style="left:465px;width:136px;text-align:center;top:391px;overflow:hidden;">Покупатель</div>
<div class="t" style="left:601px;width:72px;text-align:center;top:383px;overflow:hidden;">Склад</div>
<div class="t" style="left:601px;width:72px;text-align:center;top:399px;overflow:hidden;">покупателя</div>
<div class="t" style="left:673px;width:72px;text-align:center;top:391px;overflow:hidden;">Код</div>
<div class="t" style="left:745px;width:104px;text-align:center;top:391px;overflow:hidden;">Штрихкод</div>
<div class="t" style="left:849px;width:201px;text-align:center;top:391px;overflow:hidden;">Наименование</div>
<div class="t" style="left:1050px;width:26px;text-align:center;top:375px;overflow:hidden;">Ед.</div>
<div class="t" style="left:1050px;width:26px;text-align:center;top:391px;overflow:hidden;">изм</div>
<div class="t" style="left:1050px;width:26px;text-align:center;top:407px;overflow:hidden;">.</div>
<div class="t" style="left:1076px;width:52px;text-align:center;top:391px;overflow:hidden;">Кол-во</div>
<div class="t" style="left:1128px;width:52px;text-align:center;top:375px;overflow:hidden;">Кол-во</div>
<div class="t" style="left:1128px;width:52px;text-align:center;top:391px;overflow:hidden;">(поставл</div>
<div class="t" style="left:1128px;width:52px;text-align:center;top:407px;overflow:hidden;">ено)</div>
<div class="t" style="left:1180px;width:72px;text-align:center;top:375px;overflow:hidden;">% исп.</div>
<div class="t" style="left:1180px;width:72px;text-align:center;top:391px;overflow:hidden;">заявки</div>
<div class="t" style="left:1180px;width:72px;text-align:center;top:407px;overflow:hidden;">(кол-во)</div>
<div class="t" style="left:1252px;width:65px;text-align:center;top:391px;overflow:hidden;">Сумма</div>
<div class="t" style="left:1317px;width:73px;text-align:center;top:375px;overflow:hidden;clip-path:inset(0 10px 0 0);">Сумма</div>
<div class="t" style="left:1317px;width:73px;text-align:center;top:391px;overflow:hidden;clip-path:inset(0 10px 0 0);">(поставлен</div>
<div class="t" style="left:1317px;width:73px;text-align:center;top:407px;overflow:hidden;clip-path:inset(0 10px 0 0);">о)</div>
<svg style="position:absolute;left:140px;top:419px;" width="5" height="5" viewBox="0 0 5 5"><path d="M5 0V5H0Z" fill="#e8141c"/></svg>
<svg style="position:absolute;left:252px;top:419px;" width="5" height="5" viewBox="0 0 5 5"><path d="M5 0V5H0Z" fill="#e8141c"/></svg>
<div style="left:8px;top:446px;width:1373px;height:1px;background:#e2e2e2"></div>
<div style="left:8px;top:468px;width:1373px;height:1px;background:#e2e2e2"></div>
<div style="left:7px;top:424px;width:44px;height:23px;border:1px solid #1f8dc6"></div>
<svg style="position:absolute;left:23px;top:429px;" width="13" height="13" viewBox="0 0 13 13"><rect x="0" y="0" width="13" height="13" rx="2" fill="#727272"/><path d="M2.6 6.6l2.6 2.7 5.2-6.6" fill="none" stroke="#fff" stroke-width="2.1"/></svg>
<svg style="position:absolute;left:66px;top:429px;" width="13" height="13" viewBox="0 0 13 13"><rect x="0.5" y="0.5" width="12" height="12" rx="2" fill="#fff" stroke="#6f6f6f" stroke-width="1"/></svg>
<div class="t" style="left:97px;width:48px;top:429px;overflow:hidden">111656</div>
<div class="t" style="left:149px;width:22px;top:429px;overflow:hidden"><span style="letter-spacing:-0.45px">ЗК</span></div>
<div class="t" style="left:175px;width:47px;top:429px;overflow:hidden">19.03.24</div>
<div class="t" style="left:226px;width:31px;top:429px;overflow:hidden">10:33</div>
<div class="t" style="left:261px;width:132px;top:429px;overflow:hidden"><span style="letter-spacing:-0.58px">ПЕРСПЕКТИВА ООО</span></div>
<div class="t" style="left:397px;width:68px;top:429px;overflow:hidden">Оптовый скл</div>
<div class="t" style="left:469px;width:132px;top:429px;overflow:hidden">ЗАО "ЛюксСофтТорг"</div>
<div class="t" style="left:605px;width:68px;top:429px;overflow:hidden">Магазин 13</div>
<div class="t" style="left:677px;width:68px;top:429px;overflow:hidden">4054</div>
<div class="t" style="left:749px;width:100px;top:429px;overflow:hidden">4810027010816</div>
<div class="t" style="left:853px;width:197px;top:429px;overflow:hidden"><span style="letter-spacing:-0.57px">ВОДКА КАЗАХСКАЯ СТЕПЬ СУВ. РБ (</span></div>
<div class="t" style="left:1054px;width:22px;top:429px;overflow:hidden">пор</div>
<div class="t" style="left:824px;width:300px;text-align:right;top:429px;">1</div>
<div class="t" style="left:1014px;width:300px;text-align:right;top:429px;">1,00</div>
<svg style="position:absolute;left:23px;top:451px;" width="13" height="13" viewBox="0 0 13 13"><rect x="0" y="0" width="13" height="13" rx="2" fill="#727272"/><path d="M2.6 6.6l2.6 2.7 5.2-6.6" fill="none" stroke="#fff" stroke-width="2.1"/></svg>
<svg style="position:absolute;left:66px;top:451px;" width="13" height="13" viewBox="0 0 13 13"><rect x="0.5" y="0.5" width="12" height="12" rx="2" fill="#fff" stroke="#6f6f6f" stroke-width="1"/></svg>
<div class="t" style="left:97px;width:48px;top:451px;overflow:hidden">111656</div>
<div class="t" style="left:149px;width:22px;top:451px;overflow:hidden"><span style="letter-spacing:-0.45px">ЗК</span></div>
<div class="t" style="left:175px;width:47px;top:451px;overflow:hidden">19.03.24</div>
<div class="t" style="left:226px;width:31px;top:451px;overflow:hidden">10:33</div>
<div class="t" style="left:261px;width:132px;top:451px;overflow:hidden"><span style="letter-spacing:-0.58px">ПЕРСПЕКТИВА ООО</span></div>
<div class="t" style="left:397px;width:68px;top:451px;overflow:hidden">Оптовый скл</div>
<div class="t" style="left:469px;width:132px;top:451px;overflow:hidden">ЗАО "ЛюксСофтТорг"</div>
<div class="t" style="left:605px;width:68px;top:451px;overflow:hidden">Магазин 13</div>
<div class="t" style="left:677px;width:68px;top:451px;overflow:hidden">315</div>
<div class="t" style="left:749px;width:100px;top:451px;overflow:hidden">4813503001889</div>
<div class="t" style="left:853px;width:197px;top:451px;overflow:hidden"><span style="letter-spacing:-0.3px">АРАХИС ОК ДЖИГА В ХР.ОБОЛ.ВК.Б</span></div>
<div class="t" style="left:1054px;width:22px;top:451px;overflow:hidden">пор</div>
<div class="t" style="left:824px;width:300px;text-align:right;top:451px;">1</div>
<div class="t" style="left:1014px;width:300px;text-align:right;top:451px;">1,00</div>
<svg style="position:absolute;left:16px;top:540px;" width="7" height="9" viewBox="0 0 7 9"><path d="M7 0L0 4.5L7 9Z" fill="#dcdcdc"/></svg>
<div style="left:31px;top:540px;width:1155px;height:9px;background:#dcdcdc;border-radius:4.5px"></div>
<svg style="position:absolute;left:1365px;top:540px;" width="7" height="9" viewBox="0 0 7 9"><path d="M0 0L7 4.5L0 9Z" fill="#dcdcdc"/></svg>
<div style="left:7px;top:557px;width:28px;height:22px;background:#d4e3e8;border-radius:4px"></div>
<svg style="position:absolute;left:13px;top:560px;" width="17" height="17" viewBox="0 0 17 17"><g fill="none" stroke="#3db6ea" stroke-width="1"><rect x="0.5" y="1.5" width="3" height="3" rx="1.2"/><rect x="0.5" y="6.5" width="3" height="3" rx="1.2"/><rect x="0.5" y="11.5" width="3" height="3" rx="1.2"/></g><g stroke="#222" stroke-width="1.1"><path d="M6.5 3.5h9.5M6.5 8.5h9.5M6.5 13.5h9.5"/></g></svg>
<svg style="position:absolute;left:41px;top:560px;" width="17" height="17" viewBox="0 0 17 17"><g stroke="#3db6ea" stroke-width="1.2"><path d="M5.5 1v15M10.5 1v15M1 5.5h15M1 10.5h15"/></g><rect x="0.65" y="0.65" width="14.7" height="14.7" rx="1" fill="none" stroke="#222" stroke-width="1.3"/></svg>
<svg style="position:absolute;left:69px;top:559px;" width="17" height="17" viewBox="0 0 17 17"><rect x="0.7" y="2.7" width="15.1" height="13.3" rx="2" fill="none" stroke="#222" stroke-width="1.2"/><path d="M1 6h15M4.5 0.5v3M12 0.5v3" stroke="#222" stroke-width="1.1"/><g stroke="#3db6ea" stroke-width="1.1"><path d="M2.5 11.5h11M6.5 8.5v6M10.5 8.5v6"/></g></svg>
<svg style="position:absolute;left:101px;top:559px;" width="17" height="17" viewBox="0 0 17 17"><g stroke-width="1.1"><path d="M0.5 3.5h15" stroke="#222"/><path d="M2.7 7.5h11.3" stroke="#3db6ea"/><path d="M4.7 11.5h7" stroke="#222"/><path d="M6.6 15.5h2.8" stroke="#3db6ea"/></g></svg>
<svg style="position:absolute;left:133px;top:560px;" width="17" height="17" viewBox="0 0 17 17"><path d="M13.09 8.37L14.92 9.57L14.01 11.79L11.86 11.33L11.33 11.86L11.79 14.01L9.57 14.92L8.37 13.09L7.63 13.09L6.43 14.92L4.21 14.01L4.67 11.86L4.14 11.33L1.99 11.79L1.08 9.57L2.91 8.37L2.91 7.63L1.08 6.43L1.99 4.21L4.14 4.67L4.67 4.14L4.21 1.99L6.43 1.08L7.63 2.91L8.37 2.91L9.57 1.08L11.79 1.99L11.33 4.14L11.86 4.67L14.01 4.21L14.92 6.43L13.09 7.63Z" fill="none" stroke="#222" stroke-width="1.1" stroke-linejoin="round"/><circle cx="8" cy="8" r="2.3" fill="none" stroke="#3db6ea" stroke-width="1.2"/></svg>
<svg style="position:absolute;left:165px;top:559px;" width="17" height="17" viewBox="0 0 17 17"><g fill="#3db6ea" font-family="Liberation Sans" font-size="5.5" font-weight="bold"><text x="0.3" y="5.5">1</text><text x="0.3" y="11">2</text><text x="0.3" y="16.5">3</text></g><g stroke="#222" stroke-width="1.1"><path d="M6 2.5h8.5M6 8.5h8.5M6 14.5h8.5"/></g></svg>
<svg style="position:absolute;left:193px;top:560px;" width="17" height="17" viewBox="0 0 17 17"><g stroke="#222" stroke-width="1.1"><path d="M0.5 1.5h15M0.5 5.5h15M0.5 9.5h5.5M0.5 13.5h5.5"/></g><g stroke="#3db6ea" stroke-width="1.1"><path d="M12 8.5v7.5M8.3 12.2h7.4"/></g></svg>
<svg style="position:absolute;left:225px;top:559px;" width="17" height="17" viewBox="0 0 17 17"><path d="M6.5 4.5H1.5V15.5H13V10" fill="none" stroke="#333" stroke-width="1.3" stroke-linejoin="round"/><g stroke="#3db6ea" stroke-width="1.2" fill="none"><path d="M7.5 9.5l7.5-7.5M10 1.5h5.5V7"/></g></svg>
<svg style="position:absolute;left:257px;top:559px;" width="17" height="17" viewBox="0 0 17 17"><g fill="none" stroke-width="1.1"><path d="M1 13V4.5h10M8.5 1.5l3 3-3 3" stroke="#222"/><path d="M13 4h2.5v9H6M9 10l-3 3 3 3" stroke="#3db6ea"/></g></svg>
<div style="left:1113px;top:557px;width:136px;height:22px;background:#fff;border:1px solid #cfcfcf;border-radius:4px;"></div>
<div class="t" style="left:1128px;top:562px;">Заполнить данные</div>
<div style="left:1254px;top:557px;width:128px;height:22px;background:#fff;border:1px solid #cfcfcf;border-radius:4px;"></div>
<svg style="position:absolute;left:1267px;top:562px;" width="14" height="14" viewBox="0 0 14 14"><path d="M2 10.5L9.5 3l2 2L4 12.5H2z" fill="none" stroke="#222" stroke-width="1.2"/><path d="M1 13.5h10" stroke="#3db6ea" stroke-width="1.2"/></svg>
<div class="t" style="left:1286px;top:562px;">Редактировать</div>
<div style="left:5px;top:583px;width:1379px;height:1px;background:#d0d0d0"></div>
<div style="left:1109px;top:553px;width:143px;height:30px;border:3px solid #ee0000"></div>
<div style="left:959px;top:588px;width:42px;height:22px;background:#fff;border:1px solid #cfcfcf;border-radius:4px;"></div>
<svg style="position:absolute;left:973px;top:592px;" width="14" height="14" viewBox="0 0 14 14"><path d="M2.5 6.5A5 5 0 0 1 11 3.2" fill="none" stroke="#222" stroke-width="1.5"/><path d="M11.5 0.5v3.8H7.7" fill="none" stroke="#222" stroke-width="1.4"/><path d="M11.5 7.5A5 5 0 0 1 3 10.8" fill="none" stroke="#3db6ea" stroke-width="1.5"/><path d="M2.5 13.5V9.7h3.8" fill="none" stroke="#3db6ea" stroke-width="1.4"/></svg>
<div style="left:1005px;top:588px;width:106px;height:22px;background:#fff;border:1px solid #cfcfcf;border-radius:4px;"></div>
<svg style="position:absolute;left:1020px;top:593px;" width="13" height="13" viewBox="0 0 13 13"><path d="M1 2.5A1.5 1.5 0 012.5 1H9l3 3v6.5A1.5 1.5 0 0110.5 12h-8A1.5 1.5 0 011 10.5z" fill="none" stroke="#333" stroke-width="1.4"/><path d="M3.2 8.8h6.6" stroke="#3db6ea" stroke-width="1.5"/></svg>
<div class="t" style="left:1038px;top:593px;color:#8f8f8f">Сохранить</div>
<div style="left:1115px;top:588px;width:102px;height:22px;background:#fff;border:1px solid #cfcfcf;border-radius:4px;"></div>
<svg style="position:absolute;left:1129px;top:592px;" width="12" height="13" viewBox="0 0 12 13"><path d="M0.5 2.5h11M4 0.8h4" stroke="#3db6ea" stroke-width="1.2"/><path d="M2 4v7.3a1.2 1.2 0 001.2 1.2h5.6a1.2 1.2 0 001.2-1.2V4" fill="none" stroke="#222" stroke-width="1.3"/></svg>
<div class="t" style="left:1147px;top:593px;color:#8f8f8f">Отменить</div>
<div style="left:1221px;top:588px;width:64px;height:22px;background:#fff;border:1px solid #cfcfcf;border-radius:4px;"></div>
<svg style="position:absolute;left:1235px;top:593px;" width="13" height="11" viewBox="0 0 13 11"><path d="M0.8 5.5l3.8 4L12.3 0.8" fill="none" stroke="#222" stroke-width="1.3"/></svg>
<div class="t" style="left:1253px;top:593px;"><span style="letter-spacing:-0.45px">ОК</span></div>
<div style="left:1289px;top:588px;width:93px;height:22px;background:#fff;border:1px solid #cfcfcf;border-radius:4px;"></div>
<svg style="position:absolute;left:1305px;top:593px;" width="11" height="11" viewBox="0 0 11 11"><path d="M0.8 0.8l9.4 9.4M10.2 0.8L0.8 10.2" stroke="#222" stroke-width="1.3"/></svg>
<div class="t" style="left:1323px;top:593px;">Закрыть</div>
<svg style="position:absolute;left:0;top:0" width="1393" height="613"><line x1="549.6" y1="472" x2="337" y2="290.5" stroke="#ff0000" stroke-width="3" stroke-linecap="round"/><line x1="337" y1="290.5" x2="344.8817146081449" y2="304.4240286855405" stroke="#ff0000" stroke-width="3.5" stroke-linecap="round"/><line x1="337" y1="290.5" x2="351.98793679380447" y2="296.10015630718664" stroke="#ff0000" stroke-width="3.5" stroke-linecap="round"/><line x1="549.6" y1="472" x2="651.6" y2="298" stroke="#ff0000" stroke-width="3" stroke-linecap="round"/><line x1="651.6" y1="298" x2="639.2755045528502" y2="308.20327457109636" stroke="#ff0000" stroke-width="3.5" stroke-linecap="round"/><line x1="651.6" y1="298" x2="648.7174272209962" y2="313.73819475587163" stroke="#ff0000" stroke-width="3.5" stroke-linecap="round"/><line x1="549.6" y1="472" x2="1308.8" y2="295" stroke="#ff0000" stroke-width="3" stroke-linecap="round"/><line x1="1308.8" y1="295" x2="1292.9150946507723" y2="293.084332480289" stroke="#ff0000" stroke-width="3.5" stroke-linecap="round"/><line x1="1308.8" y1="295" x2="1295.4000891818039" y2="303.7431338811889" stroke="#ff0000" stroke-width="3.5" stroke-linecap="round"/><circle cx="549.6" cy="472" r="4" fill="#ff0000"/><line x1="1028" y1="468" x2="1129" y2="544" stroke="#ff0000" stroke-width="3" stroke-linecap="round"/><line x1="1129" y1="544" x2="1120.2765395521162" y2="530.587273289364" stroke="#ff0000" stroke-width="3.5" stroke-linecap="round"/><line x1="1129" y1="544" x2="1113.695907057422" y2="539.3325875257341" stroke="#ff0000" stroke-width="3.5" stroke-linecap="round"/><circle cx="1028" cy="468" r="4" fill="#ff0000"/></svg>
<div style="left:468px;top:473px;color:#ff0000;font-size:19px;line-height:26.6px;white-space:nowrap;letter-spacing:-0.08px;-webkit-text-stroke:0.2px #ff0000"><span style="letter-spacing:0.15px">Выбрать необходимое,</span><br>нажать "Заполнить данные"</div>
</body></html>
